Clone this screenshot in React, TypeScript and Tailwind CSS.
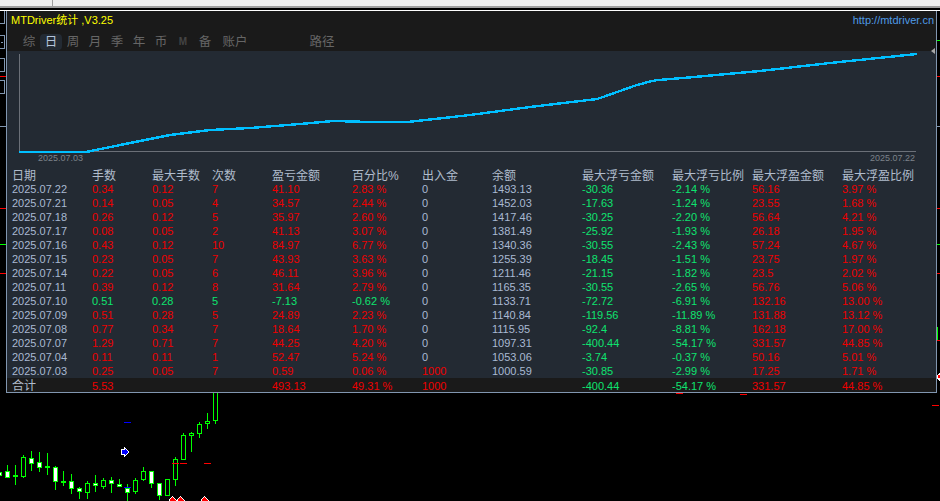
const FONT = "font-['Liberation_Sans','Noto_Sans_CJK_SC',sans-serif]";

const COLS = 'grid grid-cols-[80px_60px_60px_60px_80px_70px_70px_90px_90px_80px_90px_1fr] pl-[5px]';

const HEADERS = ['日期', '手数', '最大手数', '次数', '盈亏金额', '百分比%', '出入金', '余额', '最大浮亏金额', '最大浮亏比例', '最大浮盈金额', '最大浮盈比例'];

const ROWS = [
  ['2025.07.22', '0.34', '0.12', '7', '41.10', '2.83 %', '0', '1493.13', '-30.36', '-2.14 %', '56.16', '3.97 %'],
  ['2025.07.21', '0.14', '0.05', '4', '34.57', '2.44 %', '0', '1452.03', '-17.63', '-1.24 %', '23.55', '1.68 %'],
  ['2025.07.18', '0.26', '0.12', '5', '35.97', '2.60 %', '0', '1417.46', '-30.25', '-2.20 %', '56.64', '4.21 %'],
  ['2025.07.17', '0.08', '0.05', '2', '41.13', '3.07 %', '0', '1381.49', '-25.92', '-1.93 %', '26.18', '1.95 %'],
  ['2025.07.16', '0.43', '0.12', '10', '84.97', '6.77 %', '0', '1340.36', '-30.55', '-2.43 %', '57.24', '4.67 %'],
  ['2025.07.15', '0.23', '0.05', '7', '43.93', '3.63 %', '0', '1255.39', '-18.45', '-1.51 %', '23.75', '1.97 %'],
  ['2025.07.14', '0.22', '0.05', '6', '46.11', '3.96 %', '0', '1211.46', '-21.15', '-1.82 %', '23.5', '2.02 %'],
  ['2025.07.11', '0.39', '0.12', '8', '31.64', '2.79 %', '0', '1165.35', '-30.55', '-2.65 %', '56.76', '5.06 %'],
  ['2025.07.10', '0.51', '0.28', '5', '-7.13', '-0.62 %', '0', '1133.71', '-72.72', '-6.91 %', '132.16', '13.00 %'],
  ['2025.07.09', '0.51', '0.28', '5', '24.89', '2.23 %', '0', '1140.84', '-119.56', '-11.89 %', '131.88', '13.12 %'],
  ['2025.07.08', '0.77', '0.34', '7', '18.64', '1.70 %', '0', '1115.95', '-92.4', '-8.81 %', '162.18', '17.00 %'],
  ['2025.07.07', '1.29', '0.71', '7', '44.25', '4.20 %', '0', '1097.31', '-400.44', '-54.17 %', '331.57', '44.85 %'],
  ['2025.07.04', '0.11', '0.11', '1', '52.47', '5.24 %', '0', '1053.06', '-3.74', '-0.37 %', '50.16', '5.01 %'],
  ['2025.07.03', '0.25', '0.05', '7', '0.59', '0.06 %', '1000', '1000.59', '-30.85', '-2.99 %', '17.25', '1.71 %'],
];

const TOTAL = ['合计', '5.53', '', '', '493.13', '49.31 %', '1000', '', '-400.44', '-54.17 %', '331.57', '44.85 %'];

const TABS = [
  { label: '综', w: 'w-[22px]' },
  { label: '日', w: 'w-[22px]', active: true },
  { label: '周', w: 'w-[22px]' },
  { label: '月', w: 'w-[22px]' },
  { label: '季', w: 'w-[22px]' },
  { label: '年', w: 'w-[22px]' },
  { label: '币', w: 'w-[22px]' },
  { label: 'M', w: 'w-[22px]', dim: true },
  { label: '备', w: 'w-[22px]' },
  { label: '账户', w: 'w-[38px]' },
  { label: '路径', w: 'w-[38px] ml-[49px]' },
];

// x, body top, body bottom, wick top, wick bottom, white body or hollow
const CANDLES: [number, number, number, number, number, boolean][] = [
  [-1, 472, 475, 472, 475, true],
  [7, 471, 477, 465, 478, true],
  [15, 475, 476, 465, 485, true],
  [23, 457, 476, 455, 478, false],
  [31, 458, 463, 451, 471, true],
  [39, 462, 467, 452, 472, true],
  [47, 466, 467, 453, 475, true],
  [55, 467, 481, 466, 490, true],
  [63, 481, 482, 471, 486, true],
  [71, 481, 488, 474, 494, true],
  [79, 488, 491, 487, 499, true],
  [87, 483, 492, 481, 499, false],
  [95, 483, 485, 475, 492, true],
  [103, 480, 486, 478, 489, false],
  [111, 480, 483, 477, 493, true],
  [119, 484, 486, 479, 487, true],
  [127, 488, 492, 484, 501, true],
  [135, 480, 491, 478, 494, false],
  [143, 471, 479, 467, 481, false],
  [151, 471, 483, 471, 488, true],
  [159, 483, 495, 483, 500, true],
  [167, 479, 495, 479, 496, false],
  [175, 459, 479, 457, 486, false],
  [183, 435, 459, 433, 460, false],
  [191, 433, 435, 432, 452, false],
  [199, 424, 433, 422, 438, false],
  [207, 421, 423, 413, 429, false],
  [215, 388, 420, 388, 424, false],
];

const LINE = '19,152 86,152 130,143 170,135 210,130 250,128 300,124 333,121 372,122 408,122 470,115 530,107 597,99 603,97 637,85 652,81 658,80 683,78 760,71 830,63 917,54';

function Backdrop() {
  return (
    <svg className="absolute left-0 top-0" width="940" height="501" viewBox="0 0 940 501" shapeRendering="crispEdges">
      {/* left toolbar bits */}
      <g fill="none" stroke="#8196b0">
        <rect x="-3" y="10.5" width="7.5" height="13" />
        <rect x="-3" y="35.5" width="7.5" height="13" />
        <rect x="-3" y="58.5" width="7.5" height="13" />
        <rect x="-3" y="80.5" width="7.5" height="13" />
      </g>
      <rect x="1" y="42" width="2" height="1" fill="#8196b0" />
      <rect x="0" y="76" width="6" height="1" fill="#ff0000" />
      <rect x="0" y="126" width="6" height="1" fill="#8196b0" />
      <rect x="0" y="208" width="6" height="1" fill="#ff0000" />
      <rect x="0" y="244" width="6" height="1" fill="#00ff00" />
      <rect x="0" y="273" width="6" height="1" fill="#ff0000" />

      {/* right edge bits */}
      <rect x="937" y="40" width="3" height="1" fill="#00ff00" />
      <rect x="937" y="76" width="3" height="1" fill="#ff0000" />
      <rect x="937" y="126" width="3" height="1" fill="#8196b0" />
      <rect x="937" y="208" width="3" height="1" fill="#ff0000" />
      <rect x="937" y="244" width="3" height="1" fill="#00ff00" />
      <rect x="937" y="273" width="3" height="1" fill="#ff0000" />
      <rect x="937" y="327" width="1" height="13" fill="#00ff00" />
      <rect x="937" y="340" width="3" height="1" fill="#ff0000" />
      <path d="M940 372 L937 375 L937 379 L940 382 Z" fill="#ffffff" />
      <rect x="938" y="375" width="2" height="3" fill="#ff0000" />

      {/* candles */}
      {CANDLES.map(([x, top, bottom, wickTop, wickBottom, white]) => (
        <g key={x}>
          <rect x={x} y={wickTop} width="1" height={wickBottom - wickTop} fill="#00ff00" />
          <rect
            x={x - 1.5}
            y={top + 0.5}
            width="4"
            height={bottom - top}
            fill={bottom - top <= 1 ? '#00ff00' : white ? '#ffffff' : '#000000'}
            stroke="#00ff00"
          />
        </g>
      ))}

      {/* markers */}
      <rect x="124" y="422" width="7" height="1" fill="#0000ff" />
      <rect x="124" y="487" width="7" height="1" fill="#0000ff" />
      <path d="M121 449 L124 449 L124 447 L129.5 452 L124 457 L124 455 L121 455 Z" fill="#ffffff" />
      <path d="M122 450 L125 450 L125 449 L128 452 L125 455 L125 454 L122 454 Z" fill="#0000ff" />
      <rect x="172" y="463" width="7" height="1" fill="#ff0000" />
      <rect x="180" y="463" width="7" height="1" fill="#ff0000" />
      <rect x="204" y="463" width="7" height="1" fill="#ff0000" />
      <rect x="676" y="393" width="7" height="1" fill="#ff0000" />
      <rect x="740" y="394" width="7" height="1" fill="#ff0000" />
      <rect x="932" y="405" width="7" height="1" fill="#ff0000" />
      {[173, 181, 205].map(x => (
        <g key={x}>
          <path d={`M${x - 4} 501 L${x - 4} 499 L${x - 1} 496 L${x + 4} 501 Z`} fill="#ffffff" />
          <path d={`M${x - 3} 501 L${x - 3} 499 L${x - 1} 497 L${x + 3} 501 Z`} fill="#ff0000" />
        </g>
      ))}
    </svg>
  );
}

function Chart() {
  return (
    <svg className="block" width="929" height="102" viewBox="7 51 929 102" shapeRendering="crispEdges">
      <path d="M19.5 54 V151.5 H916" fill="none" stroke="#6b7078" />
      <polyline points={LINE} fill="none" stroke="#00bfff" strokeWidth="2.4" />
    </svg>
  );
}

function cellColor(col: number, row: string[]) {
  if (col === 6) return row[6] === '0' ? 'text-[#a9b9d2]' : 'text-[#ee0000]';
  if (col === 0 || col === 7) return 'text-[#a9b9d2]';
  if (col === 8 || col === 9) return 'text-[#0ee36f]';
  if (col >= 10) return 'text-[#ee0000]';
  return row[4].startsWith('-') ? 'text-[#0ee36f]' : 'text-[#ee0000]';
}

export default function App() {
  return (
    <div className={`relative w-[940px] h-[501px] overflow-hidden bg-black ${FONT}`}>
      <div className="relative z-10 h-[6px] bg-[#f0f0f0] flex">
        <div className="ml-[52px] w-px bg-[#a0a0a0]" />
      </div>
      <div className="relative z-10 h-[2px] bg-[#a0a0a0]" />

      <Backdrop />

      {/* stats window */}
      <div className="absolute left-[6px] top-[10px] w-[931px] h-[383px] flex flex-col border-x border-b border-[#8196b0] border-t-0 bg-[#232a33]">
        <div className="h-px -mx-[7px] w-[940px] bg-white shrink-0" />

        <div className="h-[40px] shrink-0 bg-[#1a1a1a] flex flex-col">
          <div className="h-[19px] flex items-center justify-between pl-[4px] pr-[2px] text-[11px] leading-none">
            <span className="text-[#ffff00]">MTDriver统计 ,V3.25</span>
            <span className="text-[#4f9ae6]">http://mtdriver.cn</span>
          </div>
          <div className="h-[21px] flex pl-[11px] pt-[4px] pb-px">
            {TABS.map(tab => (
              <div
                key={tab.label}
                className={`${tab.w} flex items-center justify-center rounded-sm leading-none ${tab.dim ? 'text-[10px] font-bold text-[#444444]' : 'text-[12.5px] text-[#666666]'} ${tab.active ? 'bg-[#232a33] text-[#b4c4dc]' : ''}`}
              >
                {tab.label}
              </div>
            ))}
          </div>
        </div>

        <Chart />

        <div className="h-[15px] flex justify-between pl-[31px] pr-[21px] text-[9px] leading-[11px] text-[#7c828a]">
          <span>2025.07.03</span>
          <span>2025.07.22</span>
        </div>

        <div className={`${COLS} h-[14px] items-center text-[12px] leading-none pt-px text-[#b0bccc]`}>
          {HEADERS.map(h => (
            <span key={h} className="whitespace-nowrap">{h}</span>
          ))}
        </div>

        {ROWS.map(row => (
          <div key={row[0]} className={`${COLS} h-[14px] items-center text-[11px] leading-none`}>
            {row.map((cell, i) => (
              <span key={i} className={`whitespace-nowrap ${cellColor(i, row)}`}>{cell}</span>
            ))}
          </div>
        ))}

        <div className={`${COLS} h-[14px] items-center text-[11px] leading-none bg-[#1a1a1a] overflow-hidden`}>
          {TOTAL.map((cell, i) => (
            <span
              key={i}
              className={`whitespace-nowrap pt-[2px] ${i === 0 ? 'text-[12px] text-[#b0bccc]' : cellColor(i, TOTAL)}`}
            >
              {cell}
            </span>
          ))}
        </div>

        {/* resize grip on the right edge */}
        <svg className="absolute right-0 top-[38px]" width="5" height="6" viewBox="0 0 5 6">
          <path d="M0 3 L4 0 L4 6 Z" fill="#a8a8a8" />
        </svg>
      </div>
    </div>
  );
}
